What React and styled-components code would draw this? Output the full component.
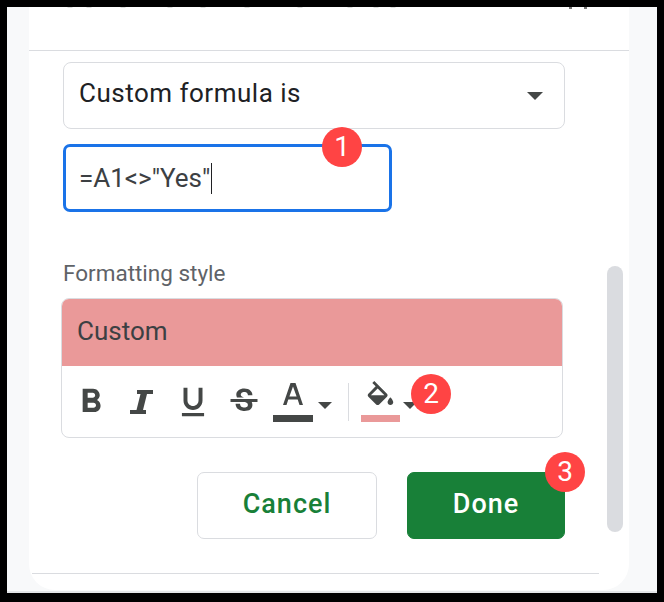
import React from "react";
import styled, { createGlobalStyle } from "styled-components";

const Global = createGlobalStyle`
  html, body { margin: 0; padding: 0; background: #000; }
  * { box-sizing: border-box; }
`;

const Frame = styled.div`
  width: 664px;
  height: 602px;
  background: #000;
  padding: 7px;
  font-family: Roboto, "Liberation Sans", sans-serif;
  overflow: hidden;
`;

const Page = styled.div`
  height: 586px;
  background: #f8f9fa;
  padding: 0 28px 0 22px;
  border-bottom: 2px solid #e3e5e8;
`;

const Panel = styled.div`
  position: relative;
  height: 583px;
  background: #fff;
  border-radius: 0 0 26px 26px;
  display: flex;
  flex-direction: column;
`;

const TopStrip = styled.div`
  height: 44px;
  border-bottom: 1px solid #dadce0;
  flex: none;
`;

const ClippedMarks = styled.svg`
  display: block;
`;

const Body = styled.div`
  flex: 1;
  padding: 11px 0 0 34px;
  display: flex;
  flex-direction: column;
`;

const Select = styled.div`
  width: 502px;
  height: 67px;
  border: 1px solid #dadce0;
  border-radius: 8px;
  display: flex;
  align-items: center;
  justify-content: space-between;
  padding: 0 21px 6px 15px;
  font-size: 26px;
  letter-spacing: 0.5px;
  color: #202124;
`;

const Caret = styled.span`
  width: 0;
  height: 0;
  margin-top: ${(p) => p.$top || 0}px;
  border-left: ${(p) => p.$size}px solid transparent;
  border-right: ${(p) => p.$size}px solid transparent;
  border-top: ${(p) => p.$size}px solid #444746;
`;

const FormulaWrap = styled.div`
  position: relative;
  width: 329px;
  height: 68px;
  margin-top: 15px;
  border: 3px solid #1a73e8;
  border-radius: 7px;
  display: flex;
  align-items: center;
  padding-left: 13px;
  font-size: 26px;
  color: #3c4043;
`;

const Cursor = styled.span`
  display: inline-block;
  width: 1px;
  height: 31px;
  background: #202124;
  margin-left: 1px;
`;

const Badge = styled.span`
  position: absolute;
  width: 40px;
  height: 40px;
  border-radius: 50%;
  background: #ff4444;
  color: #fff;
  font-family: Roboto, sans-serif;
  font-size: 28px;
  font-weight: 400;
  letter-spacing: 0;
  line-height: 40px;
  text-align: center;
  left: ${(p) => p.$x}px;
  top: ${(p) => p.$y}px;
  z-index: 2;
`;

const Label = styled.div`
  margin-top: 50px;
  height: 22px;
  line-height: 22px;
  font-size: 22.5px;
  color: #5f6368;
`;

const StyleBox = styled.div`
  width: 502px;
  height: 140px;
  margin: 14px 0 0 -2px;
  border: 1px solid #dadce0;
  border-radius: 8px;
  overflow: hidden;
`;

const Preview = styled.div`
  height: 67px;
  background: #ea9999;
  color: #3c4043;
  font-size: 26px;
  display: flex;
  align-items: center;
  padding: 0 0 3px 15px;
`;

const Toolbar = styled.div`
  height: 71px;
  display: flex;
  align-items: center;
  padding-left: 3px;
`;

const Tool = styled.div`
  display: flex;
  align-items: center;
  justify-content: center;
  flex: none;
  width: ${(p) => p.$w}px;
`;

const ColorTool = styled.div`
  display: flex;
  flex-direction: column;
  align-items: center;
  flex: none;
  width: 40px;
  height: 41px;
  margin-left: ${(p) => p.$left || 0}px;
`;

const ColorBar = styled.div`
  width: ${(p) => p.$w}px;
  height: 7px;
  margin-top: auto;
  flex: none;
  background: ${(p) => p.$color};
`;

const ToolDivider = styled.div`
  width: 1px;
  height: 38px;
  flex: none;
  margin: 0 11px 0 12px;
  background: #dadce0;
`;

const Actions = styled.div`
  display: flex;
  width: 502px;
  gap: 30px;
  justify-content: flex-end;
  margin-top: 34px;
`;

const Button = styled.button`
  position: relative;
  width: ${(p) => p.$w}px;
  height: 67px;
  border-radius: 7px;
  border: 1px solid ${(p) => (p.$primary ? "#188038" : "#dadce0")};
  background: ${(p) => (p.$primary ? "#188038" : "#fff")};
  color: ${(p) => (p.$primary ? "#fff" : "#188038")};
  font-family: inherit;
  font-size: 27px;
  font-weight: 500;
  letter-spacing: 1px;
  padding: 0 0 4px;
`;

const Scrollbar = styled.div`
  position: absolute;
  left: 578px;
  top: 259px;
  width: 16px;
  height: 266px;
  border-radius: 8px;
  background: #dadce0;
`;

const BottomRule = styled.div`
  position: absolute;
  left: 3px;
  top: 566px;
  width: 567px;
  height: 1px;
  background: #dadce0;
`;

const Icon = ({ w = 24, h = 24, box = "0 0 24 24", d }) => (
  <svg width={w} height={h} viewBox={box} fill="#444746">
    <path d={d} />
  </svg>
);

const MARKS = [41, 60, 94, 141, 174, 218, 271, 321, 347, 364];

export default function App() {
  return (
    <>
      <Global />
      <Frame>
        <Page>
          <Panel>
            <TopStrip>
              <ClippedMarks width="600" height="2" viewBox="0 0 600 2">
                {MARKS.map((x) => (
                  <rect key={x} x={x - 2.5} y="0" width="5" height="1" fill="#dcdedd" />
                ))}
                <rect x="540" y="0" width="3" height="2" fill="#777" />
                <rect x="555" y="0" width="3" height="2" fill="#777" />
              </ClippedMarks>
            </TopStrip>
            <Body>
              <Select>
                Custom formula is
                <Caret $size={8} $top={6} />
              </Select>
              <FormulaWrap>
                =A1&lt;&gt;"Yes"
                <Cursor />
                <Badge $x={256} $y={-20}>1</Badge>
              </FormulaWrap>
              <Label>Formatting style</Label>
              <StyleBox>
                <Preview>Custom</Preview>
                <Toolbar>
                  <Tool $w={51}>
                    <Icon w={40} h={40} d="M15.6 10.79c.97-.67 1.65-1.77 1.65-2.79 0-2.26-1.75-4-4-4H7v14h7.04c2.09 0 3.71-1.7 3.71-3.79 0-1.52-.86-2.82-2.15-3.42zM10 6.5h3c.83 0 1.5.67 1.5 1.5s-.67 1.5-1.5 1.5h-3v-3zm3.5 9H10v-3h3.5c.83 0 1.5.67 1.5 1.5s-.67 1.5-1.5 1.5z" />
                  </Tool>
                  <Tool $w={51}>
                    <Icon w={23} h={24} box="0 0 23 24" d="M7 0h16v4h-6l-4 16h3v4H0v-4h6.5l4-16H7z" />
                  </Tool>
                  <Tool $w={51}>
                    <Icon w={38} h={38} d="M12 17c3.31 0 6-2.69 6-6V3h-2.5v8c0 1.93-1.57 3.5-3.5 3.5S8.5 12.93 8.5 11V3H6v8c0 3.31 2.69 6 6 6zm-7 2v2h14v-2H5z" />
                  </Tool>
                  <Tool $w={51}>
                    <Icon w={36} h={36} d="M7.24 8.75c-.26-.48-.39-1.03-.39-1.67 0-.61.13-1.16.4-1.67.26-.5.63-.93 1.11-1.29.48-.35 1.05-.63 1.7-.83.66-.19 1.39-.29 2.18-.29.81 0 1.54.11 2.21.34.66.22 1.23.54 1.69.94.47.4.83.88 1.08 1.43.25.55.38 1.15.38 1.81h-3.01c0-.31-.05-.59-.15-.85-.09-.27-.24-.49-.44-.68-.2-.19-.45-.33-.75-.44-.3-.1-.66-.16-1.06-.16-.39 0-.74.04-1.03.13-.29.09-.53.21-.72.36-.19.16-.34.34-.44.55-.1.21-.15.43-.15.66 0 .48.25.88.74 1.21.38.25.77.48 1.41.7H7.39c-.05-.08-.11-.17-.15-.25zM21 12v-2H3v2h9.62c.18.07.4.14.55.2.37.17.66.34.87.51.21.17.35.36.43.57.07.2.11.43.11.69 0 .23-.05.45-.14.66-.09.2-.23.38-.42.53-.19.15-.42.26-.71.35-.29.08-.63.13-1.01.13-.43 0-.83-.04-1.18-.13s-.66-.23-.91-.42c-.25-.19-.45-.44-.59-.75-.14-.31-.25-.76-.25-1.21H6.4c0 .55.08 1.13.24 1.58.16.45.37.85.65 1.21.28.35.6.66.98.92.37.26.78.48 1.22.65.44.17.9.3 1.38.39.48.08.96.13 1.44.13.8 0 1.53-.09 2.18-.28s1.21-.45 1.67-.79c.46-.34.82-.77 1.07-1.27s.38-1.07.38-1.71c0-.6-.1-1.14-.31-1.61-.05-.11-.11-.23-.17-.33H21z" />
                  </Tool>
                  <ColorTool $left={4}>
                    <Icon w={20} h={24} box="0 -2 20 24" d="M7.5 0h5L20 22h-3.5l-1.8-5.5H5.3L3.5 22H0zM6.4 13.5h7.2L10 3.5z" />
                    <ColorBar $w={40} $color="#444746" />
                  </ColorTool>
                  <Tool $w={23}>
                    <Caret $size={7.5} $top={8} />
                  </Tool>
                  <ToolDivider />
                  <ColorTool>
                    <Icon w={35} h={35} d="M16.56 8.94 7.62 0 6.21 1.41l2.38 2.38-5.15 5.15c-.59.59-.59 1.54 0 2.12l5.5 5.5c.29.29.68.44 1.06.44s.77-.15 1.06-.44l5.5-5.5c.59-.58.59-1.53 0-2.12zM5.21 10 10 5.21 14.79 10H5.21zM19 11.5s-2 2.17-2 3.5c0 1.1.9 2 2 2s2-.9 2-2c0-1.33-2-3.5-2-3.5z" />
                    <ColorBar $w={39} $color="#ea9999" />
                  </ColorTool>
                  <Tool $w={20}>
                    <Caret $size={7.5} $top={8} />
                  </Tool>
                </Toolbar>
              </StyleBox>
              <Actions>
                <Button $w={180}>Cancel</Button>
                <Button $w={158} $primary>
                  Done
                  <Badge $x={137} $y={-21}>3</Badge>
                </Button>
              </Actions>
            </Body>
            <Badge $x={382} $y={367}>2</Badge>
            <Scrollbar />
            <BottomRule />
          </Panel>
        </Page>
      </Frame>
    </>
  );
}
